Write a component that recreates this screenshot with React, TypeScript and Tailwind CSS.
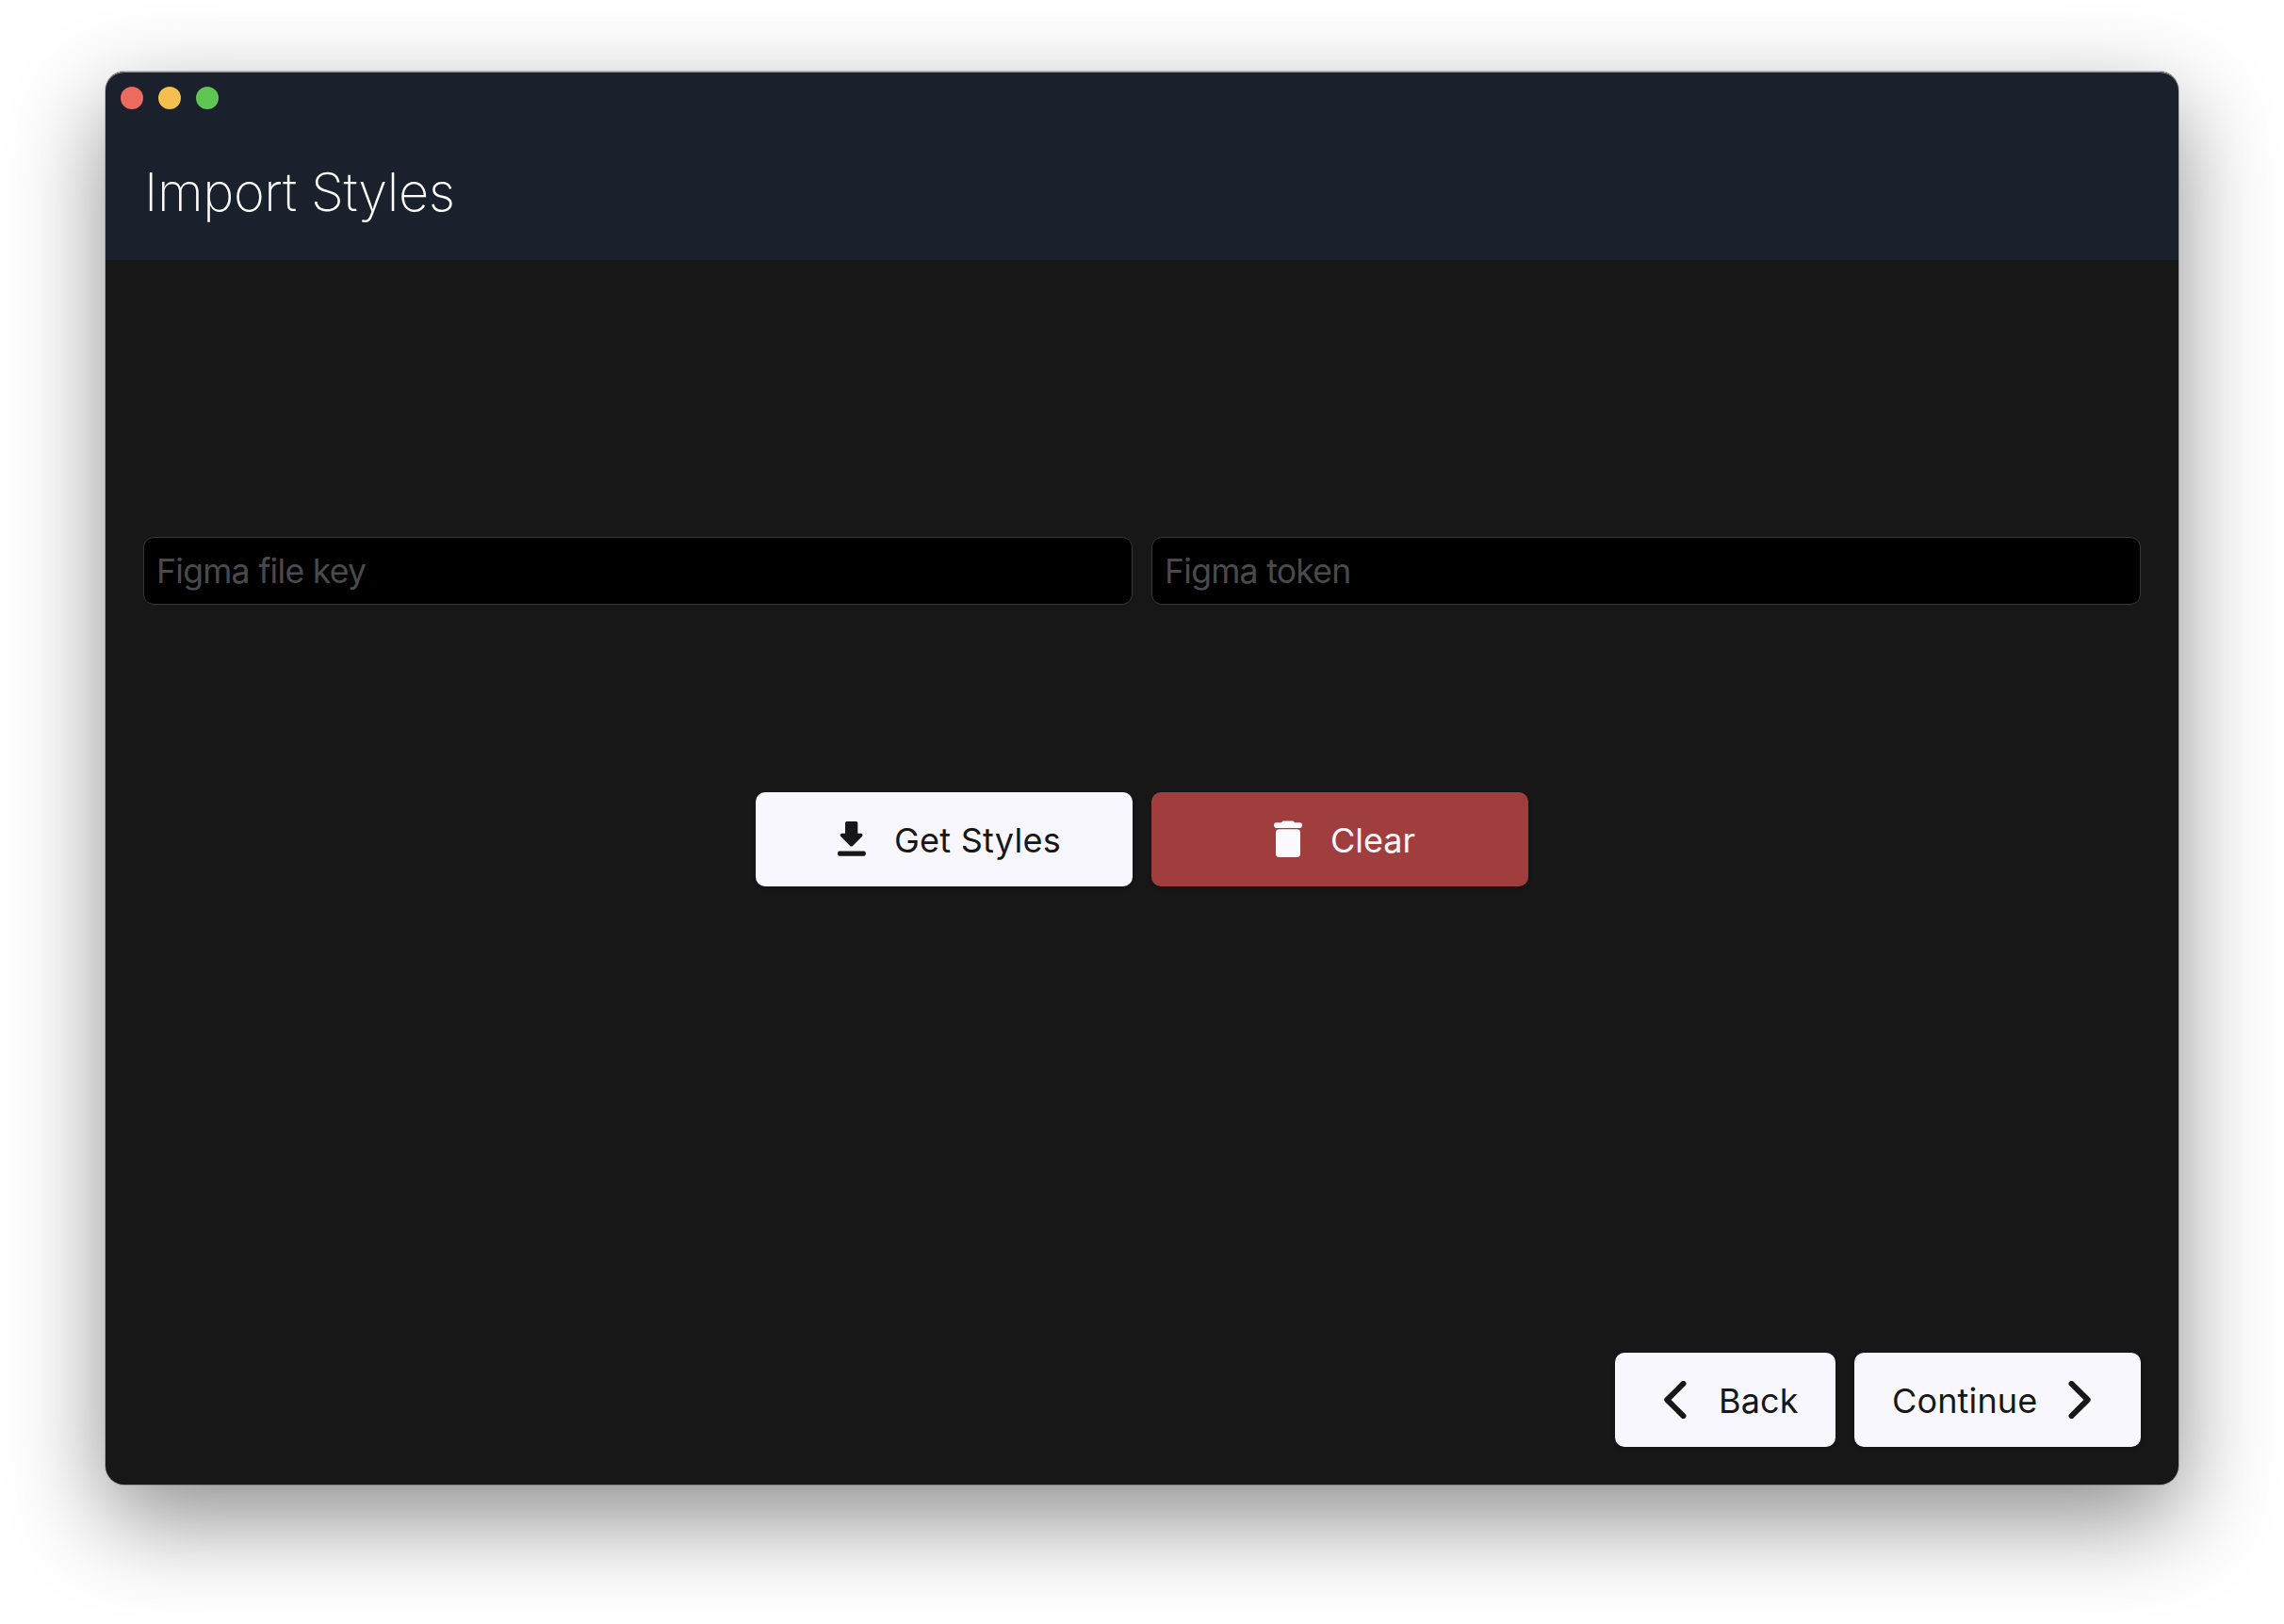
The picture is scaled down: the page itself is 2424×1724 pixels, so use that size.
import type { ReactNode } from "react";

function DownloadIcon() {
  return (
    <svg width="30" height="38" viewBox="0 0 30 38" fill="currentColor" className="shrink-0">
      <path d="M9.6 0H19.7Q21.3 0 21.3 1.6V12.8H24.9Q27.6 13.6 25.9 15.9L16 25.9Q14.6 27.2 13.2 25.9L3.3 15.9Q1.7 13.6 4.4 12.8H8V1.6Q8 0 9.6 0Z" />
      <rect x="0" y="31.6" width="29.8" height="5.2" rx="2" />
    </svg>
  );
}

function TrashIcon() {
  return (
    <svg width="30" height="40" viewBox="0 0 30 40" fill="currentColor" className="shrink-0">
      <path d="M10.2 0.5H19.6Q21.5 0.7 22 2.3H27.4Q30 2.4 30 5Q30 7.7 27.4 7.9H2.6Q0 7.7 0 5Q0 2.4 2.6 2.3H8Q8.5 0.7 10.2 0.5Z" />
      <path d="M5.5 9.2H24.5Q28 9.4 28 12.8V35.2Q28 39 24.3 39H5.7Q2 39 2 35.2V12.8Q2 9.4 5.5 9.2Z" />
    </svg>
  );
}

function Chevron({ d }: { d: string }) {
  return (
    <svg width="24" height="40" viewBox="0 0 24 40" fill="none" stroke="currentColor" strokeWidth="6" strokeLinecap="round" strokeLinejoin="round" className="shrink-0">
      <path d={d} />
    </svg>
  );
}

function Field({ placeholder }: { placeholder: string }) {
  return (
    <input
      placeholder={placeholder}
      className="h-[72px] min-w-0 flex-1 rounded-[11px] border border-[#383838] bg-black px-[13px] text-[35.5px] tracking-[-0.7px] text-white placeholder:text-[#4a4a4c] placeholder:opacity-100"
    />
  );
}

function Button({ className, children }: { className: string; children: ReactNode }) {
  return (
    <button className={`flex h-[100px] items-center rounded-[10px] text-[36px] leading-none shadow-[0_2px_4px_rgba(0,0,0,0.15)] ${className}`}>
      {children}
    </button>
  );
}

export default function App() {
  return (
    <div className="h-[1724px] w-[2424px] overflow-hidden bg-white px-[112px] pt-[76px] font-['Inter',sans-serif]">
      <main className="flex h-[1500px] flex-col overflow-hidden rounded-[20px] bg-[#171717] shadow-[0_0_0_1px_rgba(0,0,0,0.2),0_36px_100px_rgba(0,0,0,0.45)]">
        <header className="h-[200px] shrink-0 rounded-t-[20px] bg-[#1a202c] shadow-[inset_0_1px_0_rgba(255,255,255,0.5)]">
          <div className="flex gap-4 pt-4 pl-4">
            <span className="size-6 rounded-full bg-[#ed6a5e]" />
            <span className="size-6 rounded-full bg-[#f5bf4f]" />
            <span className="size-6 rounded-full bg-[#61c554]" />
          </div>
          <h1 className="mt-[54px] ml-[41px] text-[56px] leading-[68px] font-extralight tracking-[-0.4px] text-white">Import Styles</h1>
        </header>

        <section className="mt-[294px] flex gap-5 px-10">
          <Field placeholder="Figma file key" />
          <Field placeholder="Figma token" />
        </section>

        <section className="mt-[199px] flex justify-center gap-5">
          <Button className="w-[400px] bg-[#f8f7fd] pl-[87px] text-[#171717]">
            <DownloadIcon />
            <span className="ml-[30px] pt-[2px] tracking-[0.25px]">Get Styles</span>
          </Button>
          <Button className="w-[400px] bg-[#a03e3e] pl-[130px] text-[#fcfaff]">
            <TrashIcon />
            <span className="ml-[30px] pt-[2px]">Clear</span>
          </Button>
        </section>

        <footer className="mt-auto flex justify-end gap-5 px-10 pb-10">
          <Button className="w-[234px] bg-[#f8f7fd] pl-[52.5px] text-[#171717]">
            <Chevron d="M20.5 2.9L3.3 20L20.5 37.1" />
            <span className="ml-[34px] pt-[2px] tracking-[0.15px]">Back</span>
          </Button>
          <Button className="w-[304.5px] bg-[#f8f7fd] pl-[40.5px] text-[#171717]">
            <span className="w-[187px] pt-[2px] text-left tracking-[0.15px]">Continue</span>
            <Chevron d="M3.5 2.9L20.7 20L3.5 37.1" />
          </Button>
        </footer>
      </main>
    </div>
  );
}
